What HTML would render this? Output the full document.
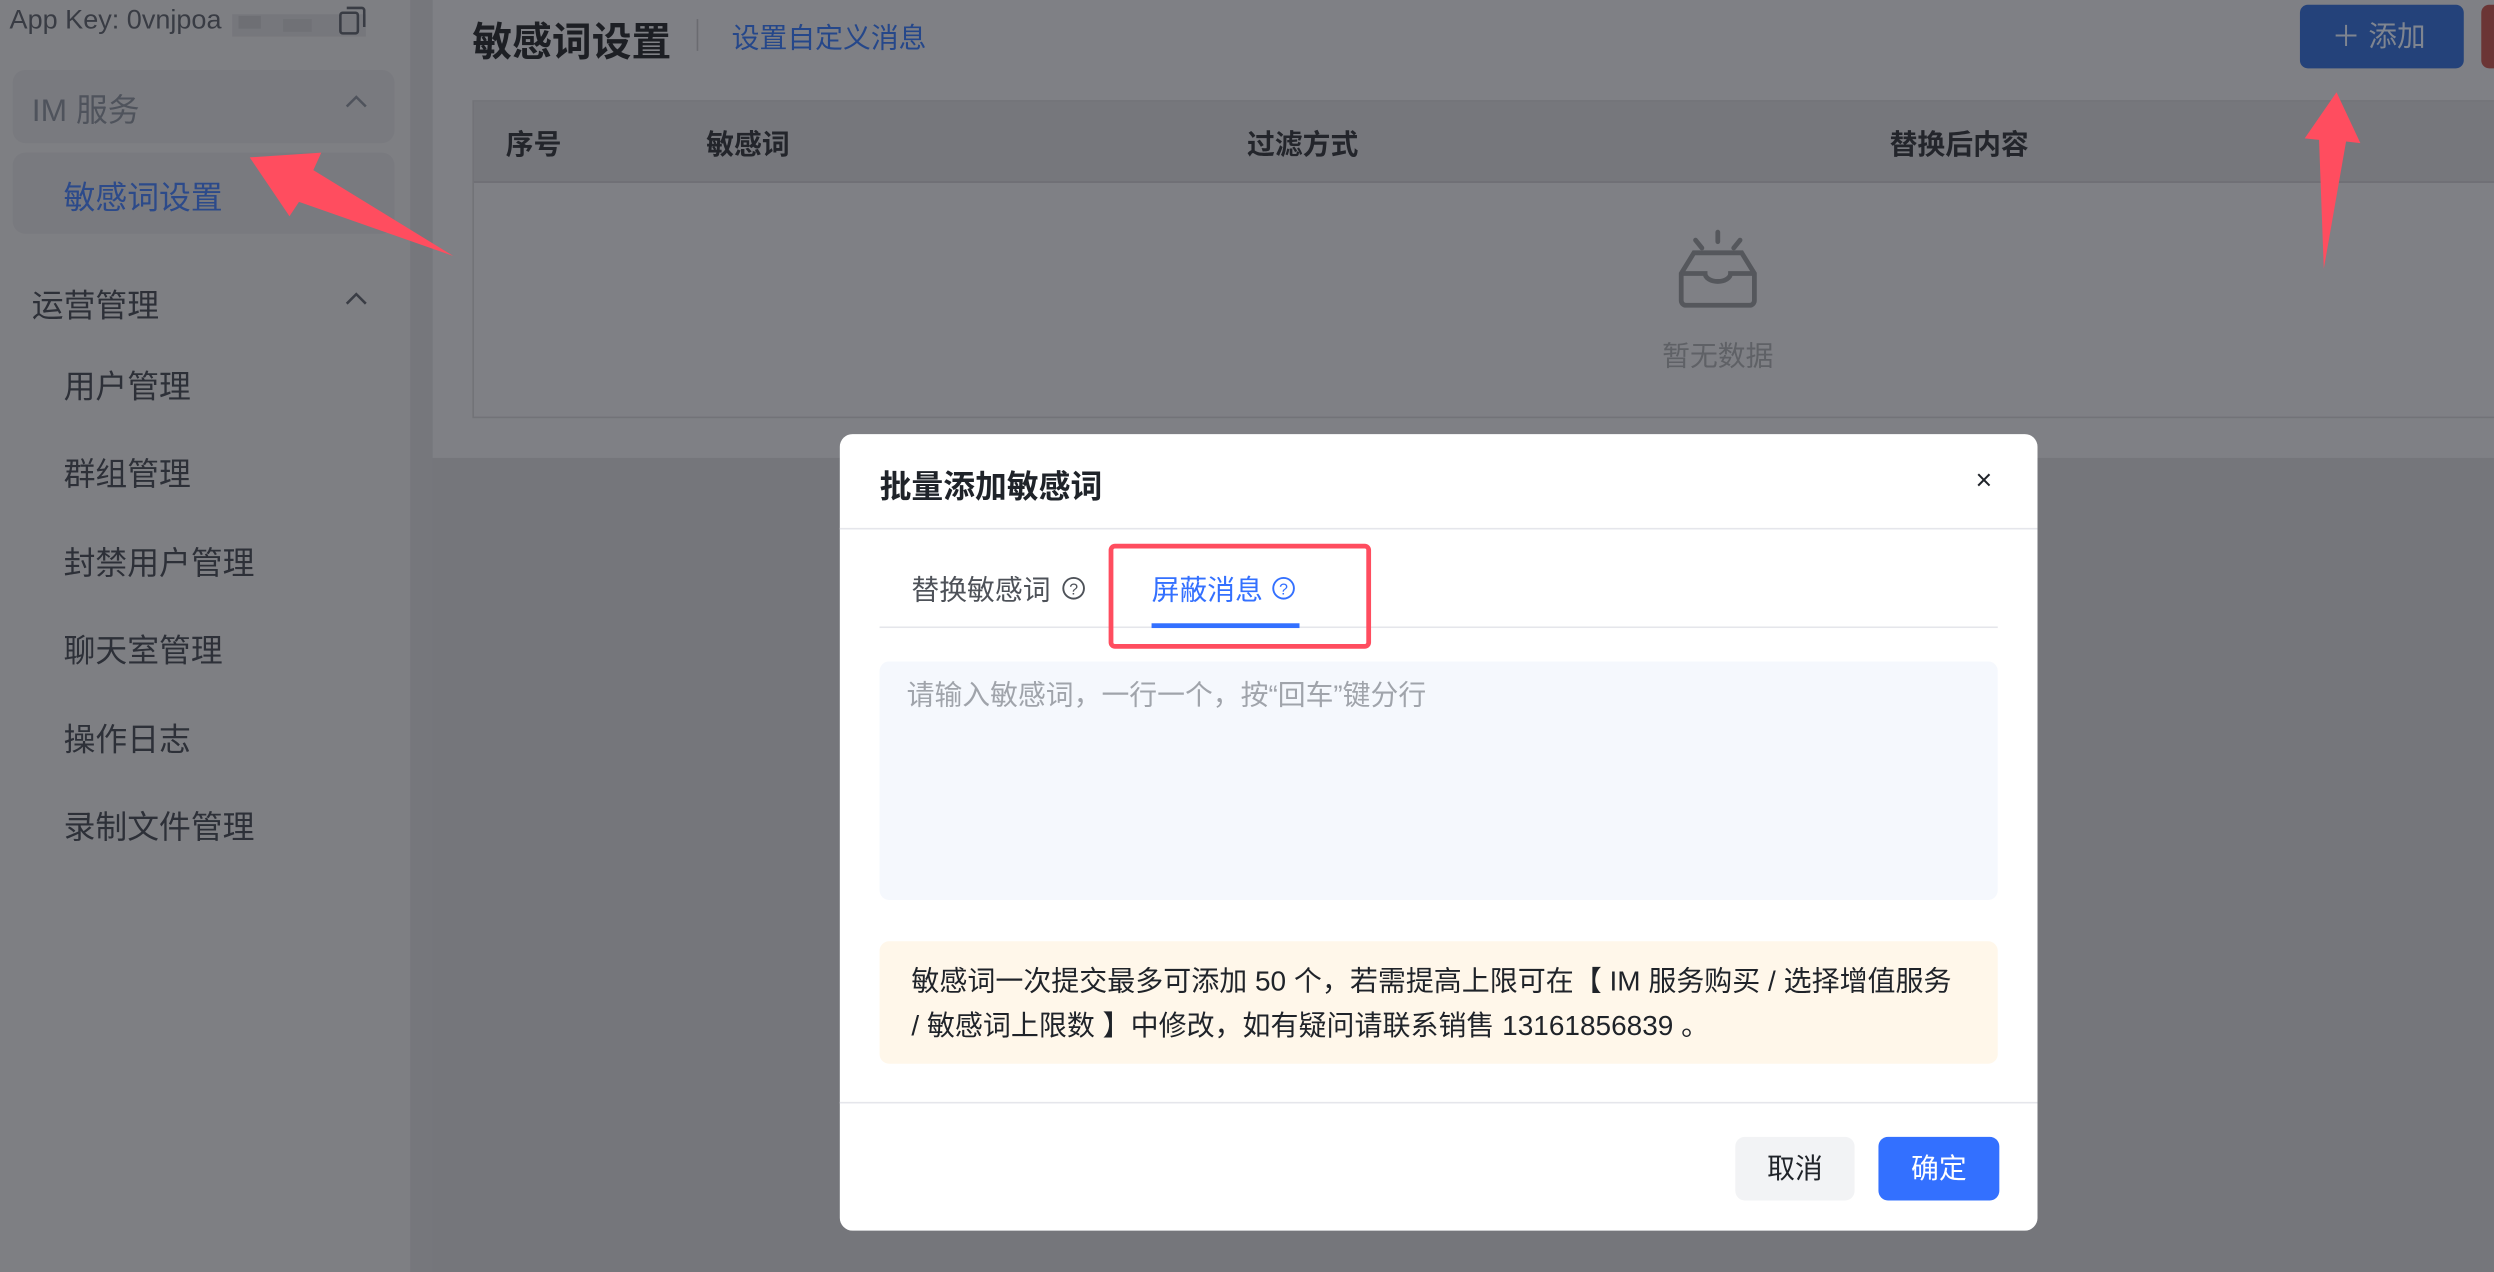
<!DOCTYPE html>
<html><head><meta charset="utf-8"><style>
*{margin:0;padding:0;box-sizing:border-box}
html,body{width:2494px;height:1272px;overflow:hidden;background:#75767b}
#w{position:absolute;left:0;top:0;width:1568px;height:800px;transform:scale(1.59056,1.59);transform-origin:0 0;font-family:"Liberation Sans","Noto Sans CJK SC",sans-serif}
.a{position:absolute;white-space:nowrap}
</style></head><body><div id="w">
<div class="a" style="left:0;top:0;width:258px;height:800px;background:#7e7f83"></div>
<div class="a" style="left:258px;top:0;width:14px;height:800px;background:#76777c"></div>
<div class="a" style="left:272px;top:0;width:1296px;height:288px;background:#7f8085"></div>
<div class="a" style="left:6px;top:3px;font-size:17px;color:#393c44">App Key: 0vnjpoa</div>
<div class="a" style="left:146px;top:9px;width:84px;height:14px;background:#76777c"></div>
<div class="a" style="left:150px;top:10px;width:14px;height:8px;background:#6e6f74"></div>
<div class="a" style="left:178px;top:12px;width:18px;height:8px;background:#707176"></div>
<svg class="a" style="left:212px;top:2px" width="20" height="22" viewBox="0 0 20 22" fill="none" stroke="#393c44" stroke-width="1.6"><rect x="2" y="6" width="11" height="13" rx="1.5"/><path d="M6 3h9.5a1.5 1.5 0 0 1 1.5 1.5V15"/></svg>
<div class="a" style="left:8px;top:44px;width:240px;height:46px;background:#797a7f;border-radius:8px"></div>
<div class="a" style="left:8px;top:96px;width:240px;height:51px;background:#797a7f;border-radius:8px"></div>
<div class="a" style="left:20px;top:53px;font-size:20px;color:#4f535c">IM 服务</div>
<svg class="a" style="left:216px;top:58px" width="16" height="12"><path d="M2 9l6-6 6 6" fill="none" stroke="#4f535c" stroke-width="1.6"/></svg>
<div class="a" style="left:40px;top:108px;font-size:20px;color:#2c4a8a">敏感词设置</div>
<div class="a" style="left:20px;top:176px;font-size:20px;color:#2d3038">运营管理</div>
<svg class="a" style="left:216px;top:182px" width="16" height="12"><path d="M2 9l6-6 6 6" fill="none" stroke="#3a3d45" stroke-width="1.6"/></svg>
<div class="a" style="left:40px;top:217px;font-size:20px;color:#2d3038;line-height:55.4px">用户管理<br>群组管理<br>封禁用户管理<br>聊天室管理<br>操作日志<br>录制文件管理</div>
<div class="a" style="left:297px;top:7px;font-size:25px;font-weight:bold;color:#1d1f24">敏感词设置</div>
<div class="a" style="left:438px;top:12px;width:1px;height:20px;background:#6a6b70"></div>
<div class="a" style="left:460px;top:11px;font-size:17.5px;color:#25478a">设置自定义消息</div>
<div class="a" style="left:1446px;top:3px;width:103px;height:40px;background:#24427a;border-radius:5px;color:#7f8590;font-size:18px;line-height:40px;padding-left:20px">＋ 添加</div>
<div class="a" style="left:1560px;top:3px;width:20px;height:40px;background:#6b3535;border-radius:5px"></div>
<div class="a" style="left:297px;top:63px;width:1280px;height:200px;border:1px solid #727378"></div>
<div class="a" style="left:298px;top:64px;width:1280px;height:51px;background:#76777c;border-bottom:1px solid #6e6f74"></div>
<div class="a" style="left:318px;top:78px;font-size:17.5px;color:#23252b;font-weight:bold">序号</div>
<div class="a" style="left:444px;top:78px;font-size:17.5px;color:#23252b;font-weight:bold">敏感词</div>
<div class="a" style="left:784px;top:78px;font-size:17.5px;color:#23252b;font-weight:bold">过滤方式</div>
<div class="a" style="left:1188px;top:78px;font-size:17.5px;color:#23252b;font-weight:bold">替换后内容</div>
<svg class="a" style="left:1052px;top:142px" width="56" height="54" viewBox="0 0 56 54" fill="none" stroke="#55575c" stroke-width="3"><path d="M28 4v6M14 9l4 5M42 9l-4 5" stroke-linecap="round"/><path d="M5 30l8-13h30l8 13v17a3 3 0 0 1-3 3H8a3 3 0 0 1-3-3z"/><path d="M5 30h15a8 5 0 0 0 16 0h15"/></svg>
<div class="a" style="left:1045px;top:211px;font-size:17.5px;color:#5f6166">暂无数据</div>
<div class="a" style="left:528px;top:273px;width:753px;height:501px;background:#fff;border-radius:8px"></div>
<div class="a" style="left:553px;top:290px;font-size:20px;color:#1f2329;font-weight:bold">批量添加敏感词</div>
<div class="a" style="left:1242px;top:292px;font-size:18px;color:#1f2329">×</div>
<div class="a" style="left:528px;top:332px;width:753px;height:1px;background:#e5e6eb"></div>
<div class="a" style="left:573px;top:358px;font-size:17.5px;color:#4e5259">替换敏感词</div>
<svg class="a" style="left:667px;top:362px" width="16" height="16"><circle cx="8" cy="8" r="6.5" fill="none" stroke="#4e5259" stroke-width="1.2"/><text x="8" y="12" font-size="10" text-anchor="middle" fill="#4e5259" font-family="Liberation Sans">?</text></svg>
<div class="a" style="left:724px;top:358px;font-size:17.5px;color:#3370ff">屏蔽消息</div>
<svg class="a" style="left:799px;top:362px" width="16" height="16"><circle cx="8" cy="8" r="6.5" fill="none" stroke="#3370ff" stroke-width="1.2"/><text x="8" y="12" font-size="10" text-anchor="middle" fill="#3370ff" font-family="Liberation Sans">?</text></svg>
<div class="a" style="left:553px;top:394px;width:703px;height:1px;background:#e5e6eb"></div>
<div class="a" style="left:724px;top:392px;width:93px;height:3px;background:#3370ff"></div>
<div class="a" style="left:697px;top:342px;width:165px;height:66px;border:3px solid #ff4d5f;border-radius:4px"></div>
<div class="a" style="left:553px;top:416px;width:703px;height:150px;background:#f5f8fd;border-radius:6px"></div>
<div class="a" style="left:570px;top:424px;font-size:17.5px;color:#a0a4ab">请输入敏感词，一行一个，按“回车”键分行</div>
<div class="a" style="left:553px;top:592px;width:703px;height:77px;background:#fff7ea;border-radius:6px"></div>
<div class="a" style="left:573px;top:603px;font-size:17.6px;color:#1f2329;line-height:28px">敏感词一次提交最多可添加 50 个，若需提高上限可在【 IM 服务购买 / 选择增值服务<br>/ 敏感词上限数 】中修改，如有疑问请联系销售 13161856839 。</div>
<div class="a" style="left:528px;top:693px;width:753px;height:1px;background:#e5e6eb"></div>
<div class="a" style="left:1091px;top:715px;width:75px;height:40px;background:#f2f3f5;border-radius:6px;font-size:17.5px;line-height:40px;text-align:center;color:#1f2329">取消</div>
<div class="a" style="left:1181px;top:715px;width:76px;height:40px;background:#3370ff;border-radius:6px;font-size:17.5px;line-height:40px;text-align:center;color:#fff">确定</div>
<svg class="a" style="left:0;top:0" width="1568" height="800"><polygon fill="#ff4d5f" points="157,99 202,96 197,107 285,161 188,127 182,136"/><polygon fill="#ff4d5f" points="1469,58 1484,90 1475,89 1461,169 1458,88 1449,87"/></svg>
</div></body></html>
